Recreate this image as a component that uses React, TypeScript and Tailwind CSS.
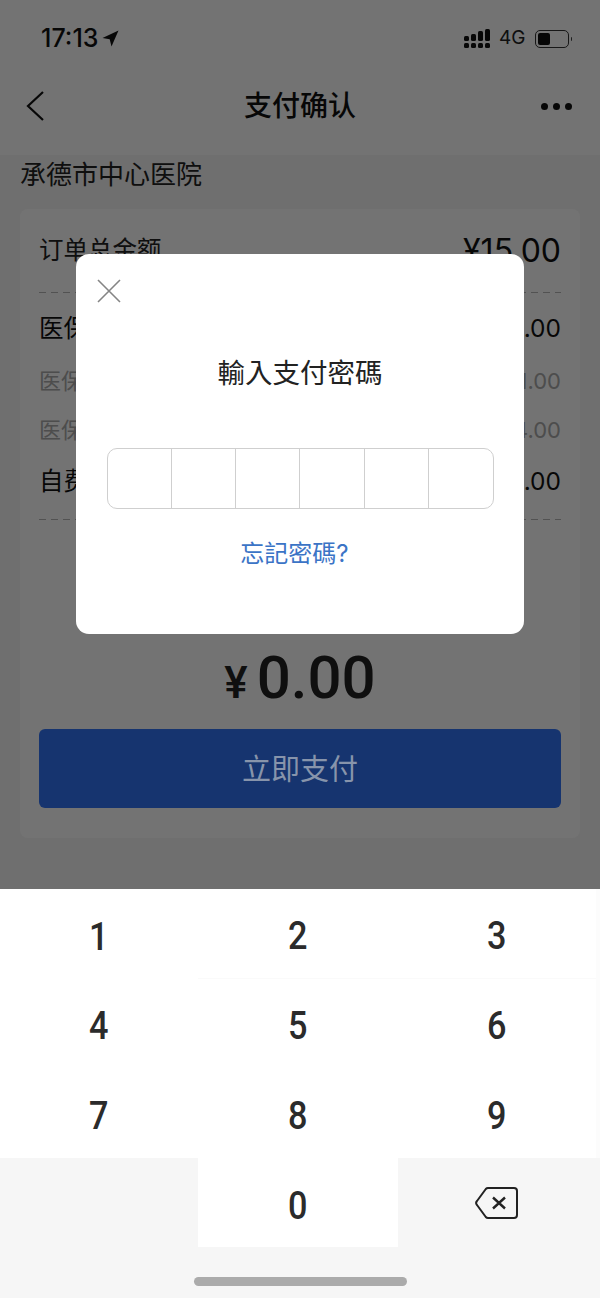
const cjk = "font-['Inter','Noto_Sans_CJK_SC',sans-serif]";

const keys = ["1", "2", "3", "4", "5", "6", "7", "8", "9"];

const amountRows = [
  { label: "医保支付", value: "¥15.00", sub: false, h: "h-[57px]" },
  { label: "医保统筹", value: "¥11.00", sub: true, h: "h-[49px]" },
  { label: "医保个账", value: "¥4.00", sub: true, h: "h-[49px]" },
  { label: "自费金额", value: "¥0.00", sub: false, h: "h-[53px]" },
];

function DashedLine() {
  return <div className="h-px bg-[repeating-linear-gradient(90deg,#b5b5b5_0_7px,transparent_7px_12px)]" />;
}

function StatusBar() {
  return (
    <div className="flex h-[76px] items-center justify-between bg-white pl-[41px] pr-[28px] pt-[1px]">
      <div className="flex items-center gap-[4px] text-[25px] font-medium text-[#111]">
        <span>17:13</span>
        <svg width="17" height="17" viewBox="0 0 17 17" className="mt-[-1px]">
          <path d="M16.5 0.5 0.5 8l7.2 1.3L9.5 16.5z" fill="#111" />
        </svg>
      </div>
      <div className="flex items-center">
        <svg width="27" height="22" viewBox="0 0 27 22" fill="#111">
          <rect x="0" y="8" width="5" height="5" rx="1.5" />
          <rect x="7" y="6" width="5" height="7" rx="1.5" />
          <rect x="14" y="3" width="5" height="10" rx="1.5" />
          <rect x="21" y="1" width="5" height="12" rx="1.5" />
          <rect x="0" y="15" width="5" height="5" rx="1.5" />
          <rect x="7" y="15" width="5" height="5" rx="1.5" />
          <rect x="14" y="15" width="5" height="5" rx="1.5" />
          <rect x="21" y="15" width="5" height="5" rx="1.5" />
        </svg>
        <span className="ml-[8px] text-[19px] text-[#222]">4G</span>
        <div className="ml-[9px] flex h-[18px] w-[34px] items-center rounded-[5px] border border-[#333] p-[2px]">
          <div className="h-full w-[12px] rounded-[2px] bg-[#111]" />
        </div>
        <div className="ml-[2px] h-[4px] w-[1.5px] rounded-r bg-[#444]" />
      </div>
    </div>
  );
}

function NavBar() {
  return (
    <div className="flex h-[79px] items-center justify-between bg-white pl-[26px] pr-[28px] pb-[19px]">
      <div className="w-[40px]">
        <svg width="18" height="30" viewBox="0 0 18 30" fill="none" stroke="#111" strokeWidth="2.2">
          <path d="M17 1 2 15l15 14" />
        </svg>
      </div>
      <div className="text-[28px] font-medium text-[#111]">支付确认</div>
      <div className="flex w-[38px] justify-end gap-[5px]">
        <div className="h-[7px] w-[7px] rounded-full bg-[#111]" />
        <div className="h-[7px] w-[7px] rounded-full bg-[#111]" />
        <div className="h-[7px] w-[7px] rounded-full bg-[#111]" />
      </div>
    </div>
  );
}

function OrderCard() {
  return (
    <div className="mx-[20px] mt-[16px] h-[629px] rounded-[8px] bg-white px-[19px]">
      <div className="flex h-[83px] items-center justify-between">
        <span className="text-[24.5px] text-[#222]">订单总金额</span>
        <span className="text-[32px] text-[#111]">¥15.00</span>
      </div>
      <DashedLine />
      <div className="flex h-[226px] flex-col pt-[7px]">
        {amountRows.map((row) => (
          <div key={row.label} className={`flex items-center justify-between ${row.h}`}>
            <span className={row.sub ? "text-[22px] text-[#aaa]" : "text-[24.5px] text-[#111]"}>
              {row.label}
            </span>
            <span className={row.sub ? "text-[22px] text-[#aaa]" : "text-[24.5px] text-[#111]"}>
              {row.value}
            </span>
          </div>
        ))}
      </div>
      <DashedLine />
      <div className="mt-[128px] flex items-baseline justify-center leading-none text-[#222] font-['Roboto',sans-serif]">
        <span className="mr-[9px] text-[44px] font-medium">¥</span>
        <span className="text-[60px] font-medium">0.00</span>
      </div>
      <div className="mt-[21px] flex h-[79px] items-center justify-center rounded-[6px] bg-[#3173f6] pt-[2px] text-[29px]">
        <span className="relative z-10 text-[#8794ab]">立即支付</span>
      </div>
    </div>
  );
}

function PasswordDialog() {
  return (
    <div className="absolute left-[76px] top-[254px] flex h-[380px] w-[448px] flex-col items-center rounded-[13px] bg-white">
      <svg
        width="24"
        height="24"
        viewBox="0 0 24 24"
        fill="none"
        stroke="#858585"
        strokeWidth="1.6"
        className="absolute left-[21px] top-[25px]"
      >
        <path d="M1 1l22 22M23 1 1 23" />
      </svg>
      <div className="mt-[99px] text-[27.5px] leading-[40px] text-[#222] font-['Inter','Noto_Sans_CJK_TC',sans-serif]">
        輸入支付密碼
      </div>
      <div className="mt-[55px] flex h-[61px] w-[387px] rounded-[10px] border border-[#cfcfcf]">
        {[0, 1, 2, 3, 4, 5].map((i) => (
          <div key={i} className="flex-1 border-r border-[#cfcfcf] last:border-r-0" />
        ))}
      </div>
      <div className="mt-[27px] mr-[11px] text-[24px] leading-[36px] text-[#3b74c6] font-['Inter','Noto_Sans_CJK_TC',sans-serif]">
        忘記密碼?
      </div>
    </div>
  );
}

function Digit({ value }: { value: string }) {
  return (
    <span className="inline-block scale-x-[0.9] text-[38px] font-medium leading-none text-[#2b2b2b] font-['Roboto',sans-serif]">
      {value}
    </span>
  );
}

function Keypad() {
  return (
    <div className="flex h-[409px] flex-col bg-[#f6f6f6]">
      <div className="h-[269px] bg-[#fcfcfc]">
        <div className="grid h-full w-[596px] grid-cols-[198px_200px_198px] grid-rows-3">
          {keys.map((key, i) => (
            <div
              key={key}
              className={`flex items-center justify-center bg-white pt-[6px] ${i === 1 || i === 2 ? "border-b border-[#fafafa]" : ""}`}
            >
              <Digit value={key} />
            </div>
          ))}
        </div>
      </div>
      <div className="grid h-[89px] grid-cols-[198px_200px_198px]">
        <div />
        <div className="flex items-center justify-center bg-white pt-[6px]">
          <Digit value="0" />
        </div>
        <div className="flex items-center justify-center">
          <svg width="44" height="32" viewBox="0 0 44 32" fill="none" stroke="#222" strokeWidth="2" strokeLinejoin="round">
            <path d="M13 1h26a3 3 0 0 1 3 3v24a3 3 0 0 1-3 3H13a3 3 0 0 1-2.2-1L2 18a3 3 0 0 1 0-4L10.8 2a3 3 0 0 1 2.2-1z" />
            <path d="M18 10.5l12 11M30 10.5l-12 11" strokeWidth="2.4" />
          </svg>
        </div>
      </div>
      <div className="flex flex-1 justify-center pt-[30px]">
        <div className="h-[9px] w-[213px] rounded-full bg-[#ababab]" />
      </div>
    </div>
  );
}

export default function App() {
  return (
    <div className={`flex h-[1298px] w-[600px] flex-col overflow-hidden bg-[#f7f7f7] ${cjk}`}>
      <div className="relative h-[889px] shrink-0">
        <StatusBar />
        <NavBar />
        <div className="px-[20px] pt-[1px] text-[26px] leading-[37px] text-[#222]">承德市中心医院</div>
        <OrderCard />
        <div className="absolute inset-0 bg-black/55" />
        <PasswordDialog />
      </div>
      <Keypad />
    </div>
  );
}
